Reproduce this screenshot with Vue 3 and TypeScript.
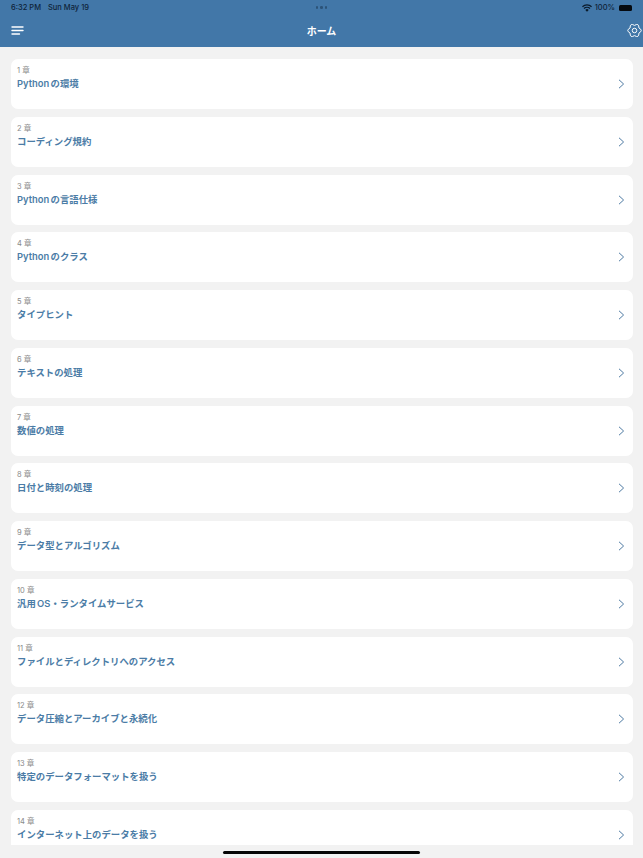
<template>
  <div class="screen">
    <header class="header">
      <div class="status">
        <div class="status__left">
          <span>6:32 PM</span>
          <span>Sun May 19</span>
        </div>
        <div class="status__dots"><i /><i /><i /></div>
        <div class="status__right">
          <svg width="10" height="8" viewBox="0 0 20 15" class="wifi">
            <path d="M10 15 6.6 11.3a4.8 4.8 0 0 1 6.8 0Z" />
            <path d="M4.9 9.5 3.1 7.6a9.8 9.8 0 0 1 13.8 0l-1.8 1.9a7.2 7.2 0 0 0-10.2 0Z" />
            <path d="M1.7 6.1 0 4.2a14.2 14.2 0 0 1 20 0l-1.7 1.9a11.8 11.8 0 0 0-16.6 0Z" />
          </svg>
          <span>100%</span>
          <span class="battery" />
        </div>
      </div>
      <div class="nav">
        <svg class="nav__menu" width="13" height="9" viewBox="0 0 13 9">
          <path d="M1 1h11M1 4.5h11M1 8h7.5" />
        </svg>
        <span class="nav__title">ホーム</span>
        <svg class="nav__gear" width="15" height="15" viewBox="0 0 24 24">
          <circle cx="12" cy="12" r="3.6" />
          <path d="M19.1 7.9Q26.5 12 19.1 16.1Q19.25 24.6 12 20.2Q4.75 24.6 4.9 16.1Q-2.5 12 4.9 7.9Q4.75 -.6 12 3.8Q19.25 -.6 19.1 7.9Z" />
        </svg>
      </div>
    </header>

    <main class="list">
      <a v-for="(chapter, i) in chapters" :key="i" class="card">
        <div class="card__text">
          <span class="card__num">{{ i + 1 }} 章</span>
          <span class="card__title">{{ chapter }}</span>
        </div>
        <svg class="card__arrow" width="7" height="10" viewBox="0 0 7 10">
          <path d="M1 .8 5.6 5 1 9.2" />
        </svg>
      </a>
    </main>

    <div class="home-bar" />
  </div>
</template>

<script setup lang="ts">
const chapters: string[] = [
  "Python の環境",
  "コーディング規約",
  "Python の言語仕様",
  "Python のクラス",
  "タイプヒント",
  "テキストの処理",
  "数値の処理",
  "日付と時刻の処理",
  "データ型とアルゴリズム",
  "汎用 OS・ランタイムサービス",
  "ファイルとディレクトリへのアクセス",
  "データ圧縮とアーカイブと永続化",
  "特定のデータフォーマットを扱う",
  "インターネット上のデータを扱う",
];
</script>

<style>
html,
body {
  margin: 0;
  background: #f2f2f2;
}
</style>

<style scoped>
.screen {
  position: relative;
  display: flex;
  flex-direction: column;
  width: 643px;
  height: 858px;
  overflow: hidden;
  background: #f2f2f2;
  font-family: Inter, "Noto Sans CJK JP", sans-serif;
}

.header {
  flex: 0 0 47px;
  background: #4277a8;
  color: #fff;
}

.status {
  display: grid;
  grid-template-columns: 1fr auto 1fr;
  align-items: center;
  height: 15px;
  padding: 0 11px;
  font-size: 7.5px;
  font-weight: 500;
  color: #0f2438;
}

.status__left {
  display: flex;
  gap: 7px;
}

.status__dots {
  display: flex;
  gap: 2px;
}

.status__dots i {
  width: 2.5px;
  height: 2.5px;
  border-radius: 50%;
  background: #2c5378;
}

.status__right {
  display: flex;
  align-items: center;
  justify-content: flex-end;
  gap: 3px;
}

.wifi {
  fill: #0a1a2a;
}

.battery {
  width: 13px;
  height: 6px;
  margin-left: 1px;
  border-radius: 1.5px;
  background: #050a10;
}

.nav {
  display: grid;
  grid-template-columns: 1fr auto 1fr;
  align-items: center;
  height: 31px;
  padding: 0 1px;
}

.nav__menu {
  margin-left: 10px;
  stroke: #fff;
  stroke-width: 1.4;
  fill: none;
  stroke-linecap: round;
}

.nav__title {
  font-size: 10px;
  font-weight: 700;
}

.nav__gear {
  justify-self: end;
  stroke: #fff;
  stroke-width: 1.6;
  fill: none;
  stroke-linejoin: round;
}

.list {
  display: flex;
  flex-direction: column;
  gap: 7.75px;
  height: 798px;
  padding: 12px 10px 0 11px;
  box-sizing: border-box;
  overflow: hidden;
}

.card {
  flex: 0 0 50px;
  display: flex;
  justify-content: space-between;
  padding: 7px 8px 0 6px;
  box-sizing: border-box;
  border-radius: 7px;
  background: #fff;
}

.card__text {
  display: flex;
  flex-direction: column;
  gap: 1px;
}

.card__num {
  font-size: 7.5px;
  line-height: 9px;
  color: #8a8a8a;
}

.card__title {
  font-size: 9.4px;
  line-height: 15px;
  font-weight: 600;
  word-spacing: -1px;
  color: #4b7ca6;
}

.card__arrow {
  margin-top: 13px;
  stroke: #4f7ba3;
  stroke-width: 1;
  fill: none;
}

.home-bar {
  position: absolute;
  left: 223px;
  bottom: 4px;
  width: 197px;
  height: 3px;
  border-radius: 2px;
  background: #050505;
}
</style>
